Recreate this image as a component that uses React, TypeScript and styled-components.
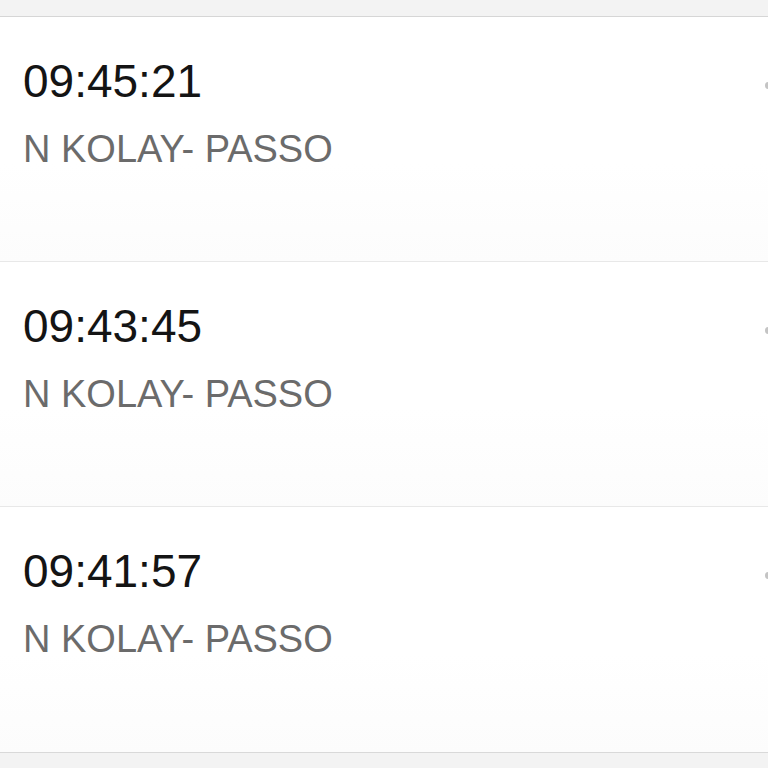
import React from 'react';
import styled, { createGlobalStyle } from 'styled-components';

const GlobalStyle = createGlobalStyle`
  html, body {
    margin: 0;
    padding: 0;
    background: #f3f3f3;
    font-family: 'Liberation Sans', Arial, sans-serif;
  }
`;

const Page = styled.div`
  width: 768px;
  height: 768px;
  overflow: hidden;
  background: #f3f3f3;
  padding-top: 16px;
  box-sizing: border-box;
`;

const List = styled.div`
  background: #fff;
  border-top: 1px solid #d6d6d6;
  border-bottom: 1px solid #d9d9d9;
`;

const Row = styled.div<{ $last?: boolean }>`
  display: flex;
  align-items: flex-start;
  height: 245px;
  box-sizing: border-box;
  padding: 41px 0 0 23px;
  border-bottom: ${(p) => (p.$last ? 'none' : '1px solid #e8e8e8')};
  background: linear-gradient(#ffffff 60%, #fcfcfc);
`;

const Texts = styled.div`
  flex: 1;
  display: flex;
  flex-direction: column;
  gap: 26px;
`;

const Time = styled.div`
  font-size: 46px;
  line-height: 1;
  color: #141414;
`;

const Label = styled.div`
  font-size: 38px;
  line-height: 1;
  color: #6b6b6b;
`;

const Dot = styled.span`
  width: 7px;
  height: 7px;
  margin-top: 24px;
  margin-right: -4px;
  border-radius: 50%;
  background: #c4c4c4;
`;

const items = ['09:45:21', '09:43:45', '09:41:57'];

export default function App() {
  return (
    <Page>
      <GlobalStyle />
      <List>
        {items.map((t, i) => (
          <Row key={t} $last={i === items.length - 1}>
            <Texts>
              <Time>{t}</Time>
              <Label>N KOLAY- PASSO</Label>
            </Texts>
            <Dot />
          </Row>
        ))}
      </List>
    </Page>
  );
}
